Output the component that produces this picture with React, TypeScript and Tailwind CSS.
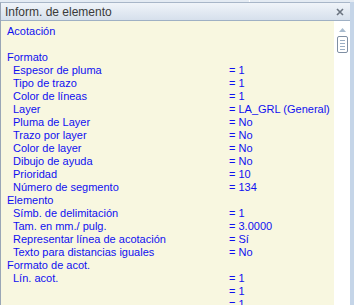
const rows: [string, string, number][] = [
  ["Acotación", "", 0],
  ["", "", 0],
  ["Formato", "", 0],
  ["Espesor de pluma", "= 1", 1],
  ["Tipo de trazo", "= 1", 1],
  ["Color de líneas", "= 1", 1],
  ["Layer", "= LA_GRL (General)", 1],
  ["Pluma de Layer", "= No", 1],
  ["Trazo por layer", "= No", 1],
  ["Color de layer", "= No", 1],
  ["Dibujo de ayuda", "= No", 1],
  ["Prioridad", "= 10", 1],
  ["Número de segmento", "= 134", 1],
  ["Elemento", "", 0],
  ["Símb. de delimitación", "= 1", 1],
  ["Tam. en mm./ pulg.", "= 3.0000", 1],
  ["Representar línea de acotación", "= Sí", 1],
  ["Texto para distancias iguales", "= No", 1],
  ["Formato de acot.", "", 0],
  ["Lín. acot.", "= 1", 1],
  ["", "= 1", 1],
  ["", "= 1", 1],
];

export default function App() {
  return (
    <div className="w-[354px] h-[305px] overflow-hidden bg-[#dde5ef] flex flex-col font-['Liberation_Sans',Arial,sans-serif]">
      <div className="h-[2px] bg-[#e4ebf3] flex">
        <div className="w-[249px]" />
        <div className="w-[1px] bg-white" />
      </div>
      <div className="flex flex-1 min-h-0">
        <div className="flex-1 flex flex-col border-l border-[#9aa6b6] border-t border-t-[#a8b6c8]">
          <div className="h-[18px] flex items-center justify-between pl-[4px] pr-[6px] bg-gradient-to-b from-[#f0f4f9] to-[#d6e0ec] border-b border-[#9fb0c4]">
            <span className="text-[12px] text-[#3a3a3a] leading-none">Inform. de elemento</span>
            <svg width="8" height="8" viewBox="0 0 8 8" className="mt-[1px]">
              <path d="M1 1 L7 7 M7 1 L1 7" stroke="#6b7480" strokeWidth="1.6" />
            </svg>
          </div>
          <div className="flex flex-1 min-h-0">
            <div className="flex-1 bg-[#f8f7e0] pt-[4px] overflow-hidden">
              {rows.map(([label, value, indent], i) => (
                <div key={i} className="flex h-[13px] items-center text-[11px] leading-none text-[#1010f0]">
                  <span className={indent ? "w-[228px] pl-[12px]" : "w-[228px] pl-[6px]"}>{label}</span>
                  <span>{value}</span>
                </div>
              ))}
            </div>
            <div className="w-[16px] bg-white flex flex-col items-center pt-[7px]">
              <svg width="7" height="4" viewBox="0 0 7 4">
                <path d="M0 4 L3.5 0 L7 4 Z" fill="#a9bccf" />
              </svg>
              <div className="mt-[4px] w-[11px] h-[17px] rounded-[2px] border border-[#7f8fa3] bg-white flex flex-col items-center justify-center gap-[2px]">
                <div className="w-[5px] h-[1px] bg-[#9aaec4]" />
                <div className="w-[5px] h-[1px] bg-[#9aaec4]" />
                <div className="w-[5px] h-[1px] bg-[#9aaec4]" />
                <div className="w-[5px] h-[1px] bg-[#9aaec4]" />
              </div>
            </div>
          </div>
        </div>
        <div className="w-[4px] bg-[#c5d5e8]" />
      </div>
    </div>
  );
}
